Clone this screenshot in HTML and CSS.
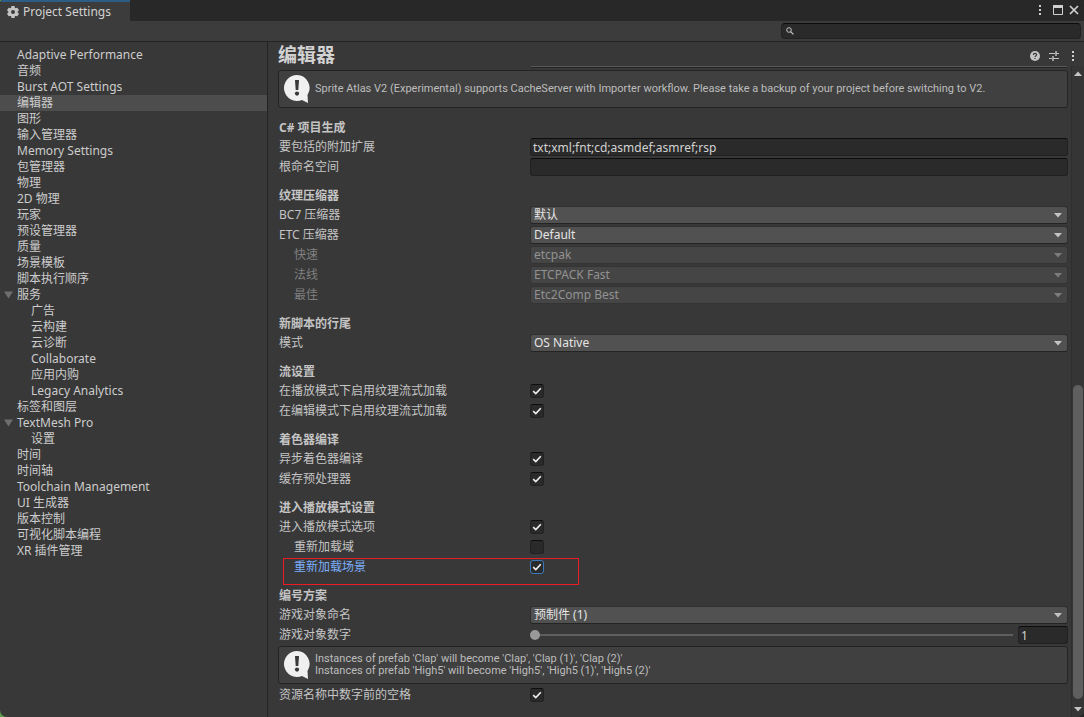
FILE: index.html
```html
<!DOCTYPE html>
<html lang="zh-CN">
<head>
<meta charset="utf-8">
<title>Project Settings</title>
<link rel="stylesheet" href="styles.css">
</head>
<body>
<svg width="0" height="0" class="defs" aria-hidden="true">
  <symbol id="check" viewBox="0 0 14 14"><path d="M3.2 7.2 5.8 9.600 10.8 4.200" fill="none" stroke="#f0f0f0" stroke-width="1.6"/></symbol>
  <symbol id="down" viewBox="0 0 8 5"><path d="M0 0h8L4 4.6z" fill="currentColor"/></symbol>
  <symbol id="dots" viewBox="0 0 4 12"><path d="M1 1h2v2H1zM1 5h2v2H1zM1 9h2v2H1z" fill="#d0d0d0"/></symbol>
  <symbol id="info" viewBox="0 0 28 30"><path d="M14 1a13 13 0 1 0 5 25l6 3-.5-8A13 13 0 0 0 14 1z" fill="#f0f0f0"/><path d="M12 6h4l-.7 10h-2.6z" fill="#383838"/><circle cx="14" cy="19.6" r="2.1" fill="#383838"/></symbol>
</svg>
<div class="window">
  <header class="tabbar">
    <div class="tab">
      <svg class="gear" viewBox="0 0 14 14"><g fill="#c4c4c4"><rect x="5.2" y="1" width="3.6" height="12" rx=".8"/><rect x="5.2" y="1" width="3.6" height="12" rx=".8" transform="rotate(60 7 7)"/><rect x="5.2" y="1" width="3.6" height="12" rx=".8" transform="rotate(120 7 7)"/><circle cx="7" cy="7" r="4.6"/></g><circle cx="7" cy="7" r="2" fill="#3c3c3c"/></svg>
      <span>Project Settings</span>
    </div>
    <div class="window-buttons">
      <button aria-label="Menu"><svg width="4" height="12"><use href="#dots"/></svg></button>
      <button aria-label="Maximize"><svg width="10" height="10" viewBox="0 0 10 10"><path d="M.5 .5h9v9h-9z" fill="none" stroke="#d0d0d0"/><path d="M0 0h10v3H0z" fill="#d0d0d0"/></svg></button>
      <button aria-label="Close"><svg width="10" height="10" viewBox="0 0 10 10"><path d="M1 1l8 8M9 1 1 9" stroke="#d0d0d0" stroke-width="1.7"/></svg></button>
    </div>
  </header>
  <div class="toolbar">
    <label class="search">
      <svg width="8" height="8" viewBox="0 0 8 8"><circle cx="3" cy="3" r="2.3" fill="none" stroke="#c4c4c4"/><path d="M4.6 4.6 7.4 7.4" stroke="#c4c4c4" stroke-width="1.3"/></svg>
      <input type="text" aria-label="Search">
    </label>
  </div>
  <div class="body">
    <nav class="sidebar">
      <a href="#">Adaptive Performance</a>
      <a href="#">音频</a>
      <a href="#">Burst AOT Settings</a>
      <a href="#" class="selected">编辑器</a>
      <a href="#">图形</a>
      <a href="#">输入管理器</a>
      <a href="#">Memory Settings</a>
      <a href="#">包管理器</a>
      <a href="#">物理</a>
      <a href="#">2D 物理</a>
      <a href="#">玩家</a>
      <a href="#">预设管理器</a>
      <a href="#">质量</a>
      <a href="#">场景模板</a>
      <a href="#">脚本执行顺序</a>
      <a href="#" class="parent"><svg class="fold" viewBox="0 0 10 8"><path d="M0 0h10L5 8z"/></svg>服务</a>
      <a href="#" class="child">广告</a>
      <a href="#" class="child">云构建</a>
      <a href="#" class="child">云诊断</a>
      <a href="#" class="child">Collaborate</a>
      <a href="#" class="child">应用内购</a>
      <a href="#" class="child">Legacy Analytics</a>
      <a href="#">标签和图层</a>
      <a href="#" class="parent"><svg class="fold" viewBox="0 0 10 8"><path d="M0 0h10L5 8z"/></svg>TextMesh Pro</a>
      <a href="#" class="child">设置</a>
      <a href="#">时间</a>
      <a href="#">时间轴</a>
      <a href="#">Toolchain Management</a>
      <a href="#">UI 生成器</a>
      <a href="#">版本控制</a>
      <a href="#">可视化脚本编程</a>
      <a href="#">XR 插件管理</a>
    </nav>
    <main class="main">
      <div class="title-row">
        <h1>编辑器</h1>
        <div class="title-buttons">
          <button aria-label="Help"><svg width="10" height="10" viewBox="0 0 10 10"><circle cx="5" cy="5" r="5" fill="#c4c4c4"/><path d="M3.4 3.9C3.4 1.9 6.6 1.9 6.6 3.8 6.6 5 5 4.9 5 6.1" fill="none" stroke="#383838" stroke-width="1.2"/><path d="M4.4 6.9h1.2v1.2H4.4z" fill="#383838"/></svg></button>
          <button aria-label="Presets"><svg width="10" height="10" viewBox="0 0 10 10"><path d="M0 2.500h6M7 2.500h3M0 7.500h3M4 7.500h6" stroke="#c4c4c4"/><path d="M7 0v5M4 5v5" stroke="#c4c4c4" stroke-width="1.4"/></svg></button>
          <button aria-label="More"><svg width="4" height="12"><use href="#dots"/></svg></button>
        </div>
      </div>
      <div class="scroll-area">
        <form class="content">
          <div class="field-end"></div>
          <div class="help"><svg width="28" height="30"><use href="#info"/></svg><p>Sprite Atlas V2 (Experimental) supports CacheServer with Importer workflow. Please take a backup of your project before switching to V2.</p></div>

          <h2>C# 项目生成</h2>
          <div class="row"><label for="ext">要包括的附加扩展</label><input id="ext" class="text" type="text" value="txt;xml;fnt;cd;asmdef;asmref;rsp"></div>
          <div class="row"><label for="ns">根命名空间</label><input id="ns" class="text" type="text"></div>

          <h2>纹理压缩器</h2>
          <div class="row"><label for="bc7">BC7 压缩器</label><div class="drop"><select id="bc7"><option>默认</option></select><svg><use href="#down"/></svg></div></div>
          <div class="row"><label for="etc">ETC 压缩器</label><div class="drop"><select id="etc"><option>Default</option></select><svg><use href="#down"/></svg></div></div>
          <div class="row sub off"><label for="fast">快速</label><div class="drop"><select id="fast" disabled><option>etcpak</option></select><svg><use href="#down"/></svg></div></div>
          <div class="row sub off"><label for="normal">法线</label><div class="drop"><select id="normal" disabled><option>ETCPACK Fast</option></select><svg><use href="#down"/></svg></div></div>
          <div class="row sub off"><label for="best">最佳</label><div class="drop"><select id="best" disabled><option>Etc2Comp Best</option></select><svg><use href="#down"/></svg></div></div>

          <h2>新脚本的行尾</h2>
          <div class="row"><label for="mode">模式</label><div class="drop"><select id="mode"><option>OS Native</option></select><svg><use href="#down"/></svg></div></div>

          <h2>流设置</h2>
          <div class="row"><label for="play">在播放模式下启用纹理流式加载</label><div class="tick"><input id="play" type="checkbox" checked><svg><use href="#check"/></svg></div></div>
          <div class="row"><label for="edit">在编辑模式下启用纹理流式加载</label><div class="tick"><input id="edit" type="checkbox" checked><svg><use href="#check"/></svg></div></div>

          <h2>着色器编译</h2>
          <div class="row"><label for="async">异步着色器编译</label><div class="tick"><input id="async" type="checkbox" checked><svg><use href="#check"/></svg></div></div>
          <div class="row"><label for="cache">缓存预处理器</label><div class="tick"><input id="cache" type="checkbox" checked><svg><use href="#check"/></svg></div></div>

          <h2>进入播放模式设置</h2>
          <div class="row"><label for="enter">进入播放模式选项</label><div class="tick"><input id="enter" type="checkbox" checked><svg><use href="#check"/></svg></div></div>
          <div class="row sub"><label for="domain">重新加载域</label><div class="tick"><input id="domain" type="checkbox"><svg><use href="#check"/></svg></div></div>
          <div class="row sub active"><label for="scene">重新加载场景</label><div class="tick"><input id="scene" type="checkbox" checked><svg><use href="#check"/></svg></div><div class="marker"></div></div>

          <h2>编号方案</h2>
          <div class="row"><label for="naming">游戏对象命名</label><div class="drop"><select id="naming"><option>预制件 (1)</option></select><svg><use href="#down"/></svg></div></div>
          <div class="row"><label for="digits">游戏对象数字</label><div class="slider"><input id="digits" type="range" min="1" max="5" value="1"><input class="text" type="text" value="1" aria-label="游戏对象数字"></div></div>
          <div class="help"><svg width="28" height="30"><use href="#info"/></svg><div><p>Instances of prefab 'Clap' will become 'Clap', 'Clap (1)', 'Clap (2)'</p><p>Instances of prefab 'High5' will become 'High5', 'High5 (1)', 'High5 (2)'</p></div></div>
          <div class="row"><label for="space">资源名称中数字前的空格</label><div class="tick"><input id="space" type="checkbox" checked><svg><use href="#check"/></svg></div></div>
        </form>
        <div class="scrollbar">
          <svg class="arrow up"><use href="#down"/></svg>
          <div class="track"><div class="thumb"></div></div>
          <svg class="arrow"><use href="#down"/></svg>
        </div>
      </div>
    </main>
  </div>
</div>
</body>
</html>
```
FILE: styles.css
```css
* { box-sizing: border-box; }
body {
  margin: 0;
  background: linear-gradient(90deg, #5a9a48 50%, #252525 50%);
  color: #c4c4c4;
  font: 12px/16px "Noto Sans", "Noto Sans CJK SC", sans-serif;
}
.defs { position: absolute; }
input, select, button { margin: 0; font: inherit; color: inherit; }
svg { display: block; }
button { display: flex; padding: 0; border: 0; background: none; }

.window {
  display: flex;
  flex-direction: column;
  height: 100vh;
  overflow: hidden;
  border-radius: 4px 4px 7px 7px;
  background: #383838;
}
.tabbar {
  display: flex;
  justify-content: space-between;
  height: 21px;
  background: #282828;
}
.tab {
  display: flex;
  align-items: center;
  gap: 3px;
  width: 130px;
  padding: 1px 0 0 6px;
  border-top: 2px solid #2c5d87;
  background: #3c3c3c;
  color: #d2d2d2;
}
.gear { width: 14px; height: 14px; }
.window-buttons { display: flex; align-items: center; gap: 11px; padding: 0 5px 1px 0; }
.window-buttons button:last-child { margin-left: -5px; }
.toolbar {
  display: flex;
  justify-content: flex-end;
  height: 21px;
  padding: 2px 3px 2px 0;
  border-bottom: 1px solid #232323;
  background: #3c3c3c;
}
.search {
  display: flex;
  align-items: center;
  gap: 4px;
  width: 300px;
  height: 16px;
  padding-left: 4px;
  border: 1px solid #212121;
  border-top-color: #0d0d0d;
  border-radius: 4px;
  background: #2a2a2a;
}
.search input { flex: 1; min-width: 0; height: 14px; padding: 0; border: 0; outline: 0; background: none; }

.body { display: flex; flex: 1; min-height: 0; }
.sidebar {
  display: flex;
  flex-direction: column;
  flex: none;
  width: 268px;
  padding-top: 5px;
  border-right: 1px solid #232323;
}
.sidebar a {
  display: flex;
  align-items: center;
  height: 16px;
  padding-left: 17px;
  color: #cccccc;
  text-decoration: none;
  white-space: nowrap;
}
.sidebar .selected { background: #4d4d4d; }
.sidebar .child { padding-left: 31px; }
.sidebar .parent { gap: 4px; padding-left: 4px; }
.fold { width: 9px; height: 8px; fill: #6e6e6e; }

.main { display: flex; flex-direction: column; flex: 1; min-width: 0; }
.title-row {
  display: flex;
  justify-content: space-between;
  align-items: center;
  height: 24px;
  padding: 2px 9px 0 10px;
}
h1 { margin: 0; font-size: 19px; line-height: 24px; color: #d2d2d2; }
.title-buttons { display: flex; align-items: center; gap: 9px; padding-top: 2px; }
.title-buttons button:last-child { margin-left: 3px; }
.scroll-area { display: flex; flex: 1; min-height: 0; }
.content { flex: 1; min-width: 0; padding: 0 3px 0 10px; overflow: hidden; }
.field-end {
  height: 2px;
  margin: 0 1px 2px 253px;
  border-top: 1px solid #585858;
  border-bottom: 1px solid #242424;
}
.help {
  display: flex;
  align-items: center;
  gap: 4px;
  height: 38px;
  margin-bottom: 2px;
  padding-left: 4px;
  border: 1px solid #232323;
  border-radius: 3px;
  background: #404040;
  color: #bdbdbd;
  font-family: Roboto, "Noto Sans CJK SC", sans-serif;
  font-size: 11px;
  line-height: 12px;
}
.help svg { flex: none; }
.help p { margin: 0; }
h2 { margin: 10px 0 0; padding-left: 1px; font-size: 12px; line-height: 20px; }
.row {
  position: relative;
  display: grid;
  grid-template-columns: 251px 1fr;
  align-items: center;
  height: 18px;
  margin-bottom: 2px;
  padding-left: 1px;
}
.sub label { padding-left: 15px; }
.off label { color: #808080; }
.active label { color: #7baefa; }
.text {
  width: 100%;
  min-width: 0;
  height: 18px;
  padding: 0 2px;
  border: 1px solid #212121;
  border-top-color: #0d0d0d;
  border-radius: 3px;
  outline: 0;
  background: #2a2a2a;
  color: #d2d2d2;
}
.drop, .tick { display: grid; align-items: center; }
.drop > *, .tick > * { grid-area: 1 / 1; }
.drop select {
  appearance: none;
  width: 100%;
  height: 18px;
  padding: 0 20px 0 3px;
  border: 1px solid #303030;
  border-bottom-color: #242424;
  border-radius: 3px;
  outline: 0;
  background: #515151;
  color: #e4e4e4;
}
.drop select:disabled {
  border-color: #343434;
  background: #454545;
  color: #929292;
  opacity: 1;
}
.drop svg {
  justify-self: end;
  width: 8px;
  height: 5px;
  margin-right: 6px;
  color: #c4c4c4;
  pointer-events: none;
}
.off .drop svg { color: #7c7c7c; }
.tick { justify-content: start; }
.tick input {
  appearance: none;
  width: 14px;
  height: 14px;
  border: 1px solid #212121;
  border-top-color: #0d0d0d;
  border-radius: 3px;
  background: #2a2a2a;
}
.tick svg { width: 14px; height: 14px; pointer-events: none; visibility: hidden; }
.tick input:checked + svg { visibility: visible; }
.active .tick input { border-color: #3a79bb; }
.marker {
  position: absolute;
  top: 0;
  left: 5px;
  width: 296px;
  height: 27px;
  border: 1px solid #ed1c24;
  pointer-events: none;
}
.slider { display: grid; grid-template-columns: 1fr 50px; gap: 5px; align-items: center; }
.slider input[type="range"] {
  appearance: none;
  width: 100%;
  height: 10px;
  outline: 0;
  background: linear-gradient(#5e5e5e, #5e5e5e) center / 100% 2px no-repeat;
}
.slider input[type="range"]::-webkit-slider-thumb {
  appearance: none;
  width: 10px;
  height: 10px;
  border-radius: 50%;
  background: #999;
}
.scrollbar {
  display: flex;
  flex-direction: column;
  align-items: center;
  width: 13px;
  padding: 5px 0 5px;
  border-left: 1px solid #2e2e2e;
  background: #353535;
}
.arrow { width: 8px; height: 5px; color: #c4c4c4; }
.up { transform: rotate(180deg); }
.track { display: flex; flex-direction: column; justify-content: flex-end; flex: 1; padding: 8px 0; }
.thumb { width: 10px; height: 51%; border-radius: 5px; background: #5f5f5f; }
```
